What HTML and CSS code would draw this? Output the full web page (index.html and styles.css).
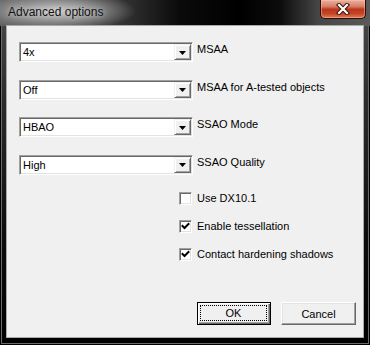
FILE: index.html
```html
<!DOCTYPE html>
<html>
<head>
<meta charset="utf-8">
<title>Advanced options</title>
<link rel="stylesheet" href="styles.css">
</head>
<body>
<div class="window">
  <div class="titlebar">
    <span class="title">Advanced options</span>
    <button class="close" aria-label="Close">
      <svg width="14" height="12" viewBox="0 0 14 12">
        <path d="M3 2 L11 10 M11 2 L3 10" stroke="#3b1209" stroke-width="4.2" stroke-linecap="square" fill="none"/>
        <path d="M3 2 L11 10 M11 2 L3 10" stroke="#ffffff" stroke-width="2.2" stroke-linecap="square" fill="none"/>
      </svg>
    </button>
  </div>
  <div class="client">
    <div class="combos">
      <div class="row">
        <div class="combo"><span class="value">4x</span><span class="arrow"><svg width="7" height="4" viewBox="0 0 7 4"><polygon points="0,0 7,0 3.5,4" fill="#000"/></svg></span></div>
        <span class="label">MSAA</span>
      </div>
      <div class="row">
        <div class="combo"><span class="value">Off</span><span class="arrow"><svg width="7" height="4" viewBox="0 0 7 4"><polygon points="0,0 7,0 3.5,4" fill="#000"/></svg></span></div>
        <span class="label">MSAA for A-tested objects</span>
      </div>
      <div class="row">
        <div class="combo"><span class="value">HBAO</span><span class="arrow"><svg width="7" height="4" viewBox="0 0 7 4"><polygon points="0,0 7,0 3.5,4" fill="#000"/></svg></span></div>
        <span class="label">SSAO Mode</span>
      </div>
      <div class="row">
        <div class="combo"><span class="value">High</span><span class="arrow"><svg width="7" height="4" viewBox="0 0 7 4"><polygon points="0,0 7,0 3.5,4" fill="#000"/></svg></span></div>
        <span class="label">SSAO Quality</span>
      </div>
    </div>
    <div class="checks">
      <div class="check"><span class="box"></span><span>Use DX10.1</span></div>
      <div class="check"><span class="box"><svg width="11" height="11" viewBox="0 0 11 11"><polyline points="2.5,5 4.5,7 8.5,3" stroke="#000" stroke-width="2" fill="none" stroke-linecap="square"/></svg></span><span>Enable tessellation</span></div>
      <div class="check"><span class="box"><svg width="11" height="11" viewBox="0 0 11 11"><polyline points="2.5,5 4.5,7 8.5,3" stroke="#000" stroke-width="2" fill="none" stroke-linecap="square"/></svg></span><span>Contact hardening shadows</span></div>
    </div>
    <div class="buttons">
      <button class="btn default"><span class="focus">OK</span></button>
      <button class="btn">Cancel</button>
    </div>
  </div>
</div>
</body>
</html>
```

FILE: styles.css
```css
html, body {
  margin: 0;
  padding: 0;
}

body {
  width: 370px;
  height: 345px;
  overflow: hidden;
  background: #000;
  font-family: "Liberation Sans", Arial, sans-serif;
  font-size: 11px;
  color: #000;
}

.window {
  width: 370px;
  height: 345px;
  box-sizing: border-box;
  display: flex;
  flex-direction: column;
  background: linear-gradient(to bottom, #4d4d4d 0, #2c2c2c 100px, #0c0c0c 240px, #000 100%);
  box-shadow:
    inset 1px 0 0 #000,
    inset -1px 0 0 #000,
    inset 0 -1px 0 #000,
    inset 2px 0 0 #6a6a6a,
    inset -2px 0 0 #6a6a6a,
    inset 0 -2px 0 #6a6a6a;
}

.titlebar {
  height: 26px;
  flex: none;
  display: flex;
  align-items: flex-start;
  background:
    radial-gradient(ellipse 80px 20px at 56px 11px, rgba(205,205,205,0.95) 0%, rgba(170,170,170,0.7) 50%, rgba(120,120,120,0) 100%),
    linear-gradient(to right, #5e5e5e 0, #3c3c3c 110px, #0a0a0a 180px, #000 240px, #0c0c0c 280px, #454545 318px, #5a5a5a 370px);
}

.title {
  padding: 5px 0 0 8px;
  font-size: 12px;
  line-height: 14px;
  color: #111;
  text-shadow: 0 0 6px rgba(255,255,255,0.8);
}

.close {
  margin-left: auto;
  margin-right: 4px;
  width: 46px;
  height: 19px;
  padding: 0;
  border: 1px solid #2b0d05;
  border-top: none;
  border-radius: 0 0 5px 5px;
  background: linear-gradient(to bottom, #eab0a0 0, #d98068 35%, #b9361c 52%, #c44325 75%, #e27a55 100%);
  box-shadow: inset 0 0 0 1px rgba(255,200,180,0.45);
  display: flex;
  align-items: center;
  justify-content: center;
}

.client {
  flex: 1;
  margin: 0 7px 8px 7px;
  background: #f0f0f0;
  box-shadow: 0 0 0 1px #a9a9a9;
  display: flex;
  flex-direction: column;
  padding: 16px 0 12px 12px;
  box-sizing: border-box;
}

.combos {
  display: flex;
  flex-direction: column;
  gap: 17.67px;
}

.row {
  display: flex;
  align-items: flex-start;
  gap: 4px;
  height: 20px;
}

.combo {
  width: 174px;
  height: 20px;
  box-sizing: border-box;
  background: #fff;
  border: 1px solid;
  border-color: #a0a0a0 #fff #fff #a0a0a0;
  box-shadow: inset 1px 1px 0 #696969, inset -1px -1px 0 #e3e3e3;
  display: flex;
  padding: 1px;
}

.value {
  flex: 1;
  display: flex;
  align-items: center;
  padding: 1px 0 0 2px;
  line-height: 13px;
}

.arrow {
  width: 17px;
  box-sizing: border-box;
  background: #f0f0f0;
  border: 1px solid;
  border-color: #f0f0f0 #696969 #696969 #f0f0f0;
  box-shadow: inset 1px 1px 0 #fff, inset -1px -1px 0 #a0a0a0;
  display: flex;
  align-items: center;
  justify-content: center;
  padding-top: 1px;
}

.arrow svg {
  display: block;
}

.label {
  line-height: 13px;
  padding-top: 1px;
}

.checks {
  display: flex;
  flex-direction: column;
  gap: 15px;
  margin-top: 17px;
  padding-left: 160px;
}

.check {
  display: flex;
  align-items: center;
  gap: 5px;
  height: 13px;
  line-height: 13px;
}

.box {
  width: 13px;
  height: 13px;
  box-sizing: border-box;
  background: #fff;
  border: 1px solid;
  border-color: #a0a0a0 #fff #fff #a0a0a0;
  box-shadow: inset 1px 1px 0 #696969, inset -1px -1px 0 #e3e3e3;
  display: flex;
  align-items: center;
  justify-content: center;
}

.box svg {
  display: block;
}

.buttons {
  margin-top: auto;
  display: flex;
  gap: 10px;
  padding-left: 178px;
}

.btn {
  width: 75px;
  height: 23px;
  box-sizing: border-box;
  padding: 0;
  font-family: "Liberation Sans", Arial, sans-serif;
  font-size: 11px;
  color: #000;
  background: #f0f0f0;
  border: 1px solid;
  border-color: #fff #696969 #696969 #fff;
  box-shadow: inset -1px -1px 0 #a0a0a0, inset 1px 1px 0 #e3e3e3;
  display: flex;
  align-items: center;
  justify-content: center;
}

.btn.default {
  width: 74px;
  border: 1px solid #000;
  box-shadow: inset 1px 1px 0 #fff, inset -1px -1px 0 #696969, inset -2px -2px 0 #a0a0a0;
  align-items: stretch;
  padding: 2px 3px 3px 2px;
}

.focus {
  flex: 1;
  display: flex;
  align-items: center;
  justify-content: center;
  border: 1px dotted #000;
}
```
